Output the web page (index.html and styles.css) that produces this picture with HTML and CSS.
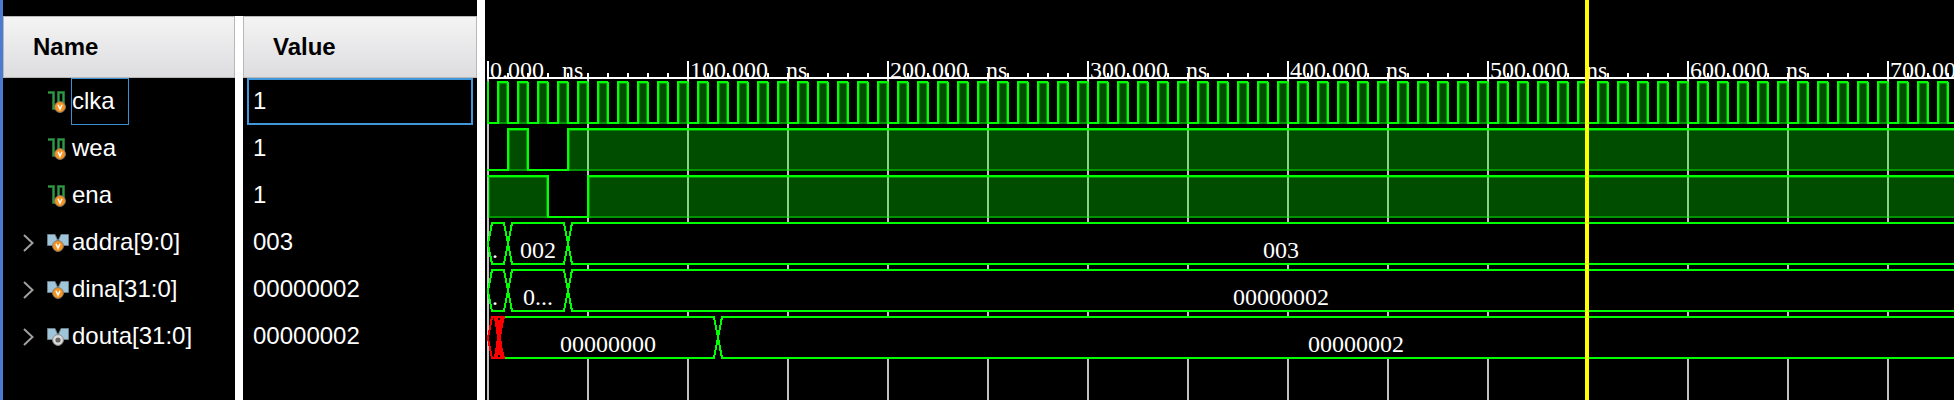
FILE: index.html
```html
<!DOCTYPE html>
<html lang="en">
<head>
<meta charset="utf-8">
<title>Waveform viewer</title>
<link rel="stylesheet" href="styles.css">
</head>
<body>
<svg class="defs" aria-hidden="true">
  <defs>
    <symbol id="scalar" viewBox="0 1 22 24">
      <path d="M1 3.5h5.5v16h5v-16h5v16" fill="none" stroke="#1c5a2a" stroke-width="3"/>
      <path d="M1 3.5h5.5v16h5v-16h5v16" fill="none" stroke="#2f9a46" stroke-width="1.6"/>
      <circle cx="13" cy="18" r="5.4" fill="#f7931e" stroke="#8a7a66"/>
      <path d="M11 15.8l2 4.400 2-4.400" fill="none" stroke="#fff" stroke-width="1.5"/>
    </symbol>
    <symbol id="bus-in" viewBox="0 0 22 24">
      <path d="M.5 3.500h7.500l2.500 5.500-3 5.500h-7zM21.500 3.500h-7.500l-2.500 5.500 3 5.500h7z" fill="#9fc5da" stroke="#6d7f88"/>
      <circle cx="11" cy="15" r="5.400" fill="#f7931e" stroke="#8a7a66"/>
      <path d="M9 12.800l2 4.400 2-4.400" fill="none" stroke="#fff" stroke-width="1.5"/>
    </symbol>
    <symbol id="bus-out" viewBox="0 0 22 24">
      <path d="M.5 3.500h7.500l2.500 5.500-3 5.500h-7zM21.500 3.500h-7.500l-2.500 5.500 3 5.500h7z" fill="#9fc5da" stroke="#6d7f88"/>
      <circle cx="11" cy="15" r="5.400" fill="#dcdcdc" stroke="#8a8a8a"/>
      <circle cx="11" cy="15" r="2.600" fill="#666"/>
    </symbol>
    <symbol id="chevron" viewBox="0 0 12 18"><path d="M1 1l8.500 8-8.500 8" fill="none" stroke="#a0a0a0" stroke-width="2"/></symbol>
    <pattern id="clock" x="3" y="0" width="20" height="47" patternUnits="userSpaceOnUse">
      <rect class="fill" x="10" y="3" width="10" height="42"/>
      <rect class="inner" x="11" y="4" width="8" height="40"/>
      <path class="edge" d="M-1 44H10V3H20V44H21M0 45V3"/>
    </pattern>
  </defs>
</svg>
<main class="viewer">
  <section class="column names">
    <h2>Name</h2>
    <ul>
      <li><svg class="icon"><use href="#scalar"/></svg><span class="focused">clka</span></li>
      <li><svg class="icon"><use href="#scalar"/></svg><span>wea</span></li>
      <li><svg class="icon"><use href="#scalar"/></svg><span>ena</span></li>
      <li><button aria-label="Expand addra"><svg><use href="#chevron"/></svg></button><svg class="icon"><use href="#bus-in"/></svg><span>addra[9:0]</span></li>
      <li><button aria-label="Expand dina"><svg><use href="#chevron"/></svg></button><svg class="icon"><use href="#bus-in"/></svg><span>dina[31:0]</span></li>
      <li><button aria-label="Expand douta"><svg><use href="#chevron"/></svg></button><svg class="icon"><use href="#bus-out"/></svg><span>douta[31:0]</span></li>
    </ul>
  </section>
  <div class="divider short"></div>
  <section class="column values">
    <h2>Value</h2>
    <ul>
      <li class="selected">1</li>
      <li>1</li>
      <li>1</li>
      <li>003</li>
      <li>00000002</li>
      <li>00000002</li>
    </ul>
  </section>
  <div class="divider"></div>
  <section class="waves">
    <div class="ruler">
      <div class="mark"><span>0.000</span><span>ns</span></div>
      <div class="mark"><span>100.000</span><span>ns</span></div>
      <div class="mark"><span>200.000</span><span>ns</span></div>
      <div class="mark"><span>300.000</span><span>ns</span></div>
      <div class="mark"><span>400.000</span><span>ns</span></div>
      <div class="mark"><span>500.000</span><span>ns</span></div>
      <div class="mark"><span>600.000</span><span>ns</span></div>
      <div class="mark"><span>700.00</span></div>
    </div>
    <div class="tracks">
      <div class="track"><svg><rect x="2" width="100%" height="47" fill="url(#clock)"/></svg></div>
      <div class="track"><svg>
        <path class="fill" d="M23 3H43V45H23zM83 3H6000V45H83z"/>
        <path class="inner" d="M24 4H42V44H24zM84 4H6000V44H84z"/>
        <path class="edge" d="M2 44H23V3H43V44H83V3H6000"/>
      </svg></div>
      <div class="track"><svg>
        <path class="fill" d="M3 3H63V45H3zM103 3H6000V45H103z"/>
        <path class="inner" d="M4 4H62V44H4zM104 4H6000V44H104z"/>
        <path class="edge" d="M2 3H63V44H103V3H6000"/>
      </svg></div>
      <div class="track"><svg>
        <path class="edge body" d="M3 24L7 3H19L27 44H79L87 3H6000V44H87L79 3H27L19 44H7z"/>
      </svg><div class="segments"><span class="w20">.</span><span class="w60">002</span><span class="rest">003</span></div></div>
      <div class="track"><svg>
        <path class="edge body" d="M3 24L7 3H19L27 44H79L87 3H6000V44H87L79 3H27L19 44H7z"/>
      </svg><div class="segments"><span class="w20">.</span><span class="w60">0...</span><span class="rest">00000002</span></div></div>
      <div class="track"><svg>
        <path class="edge body" d="M14 3H229L237 44H6000V3H237L229 44H14z"/>
        <path class="edge unknown" d="M3 24L7 3H19L14 24L19 44H7z"/>
        <path class="edge clash" d="M11 3L17 44M17 3L11 44"/>
      </svg><div class="segments"><span class="w10"></span><span class="w220">00000000</span><span class="rest">00000002</span></div></div>
    </div>
    <div class="cursor"></div>
  </section>
</main>
</body>
</html>
```
FILE: styles.css
```css
* { box-sizing: border-box; }
body {
  margin: 0;
  background: #000;
  color: #fff;
  font-family: "Liberation Sans", Arial, sans-serif;
  font-size: 24px;
}
.defs { position: absolute; width: 0; height: 0; }
.viewer {
  display: flex;
  min-height: 100vh;
  overflow: hidden;
  border-left: 3px solid #4a7bd0;
}
.column { flex: none; padding-top: 16px; }
.names { width: 232px; }
.values { width: 234px; }
.column h2 {
  margin: 0;
  height: 62px;
  padding-left: 29px;
  border: 1px solid #b8b8b8;
  background: linear-gradient(#f4f4f4, #dddde0);
  color: #000;
  font-size: 24px;
  line-height: 60px;
}
ul { margin: 0; padding: 0; list-style: none; }
li { height: 47px; line-height: 43px; }
.names li {
  display: flex;
  align-items: center;
  padding-left: 44px;
}
.names li:has(button) { padding-left: 20px; }
.names button {
  width: 12px;
  height: 18px;
  margin-right: 12px;
  padding: 0;
  border: 0;
  background: none;
}
.names button svg { display: block; width: 12px; height: 18px; }
.icon { width: 22px; height: 24px; margin-right: 2px; }
.names span { height: 47px; border: 1px solid transparent; }
.names .focused { padding-right: 13px; border-color: #3c8fd0; }
.values li {
  margin: 0 4px;
  padding-left: 4px;
  border: 2px solid transparent;
  line-height: 41px;
}
.values .selected { border-color: #4098d8; }
.divider { flex: none; width: 8px; background: #fff; }
.short { margin-top: 16px; }

.waves {
  position: relative;
  display: flex;
  flex: 1;
  flex-direction: column;
  min-width: 0;
  overflow: hidden;
  font-family: "Liberation Serif", "Times New Roman", serif;
}
.ruler {
  display: flex;
  height: 79px;
  margin-left: 2px;
  padding-top: 61px;
  border-bottom: 2px solid #fff;
  background: repeating-linear-gradient(90deg, #fff 0 2px, transparent 2px 20px) left bottom / 100% 4px no-repeat;
}
.mark {
  display: flex;
  flex: none;
  gap: 18px;
  width: 200px;
  padding-left: 1px;
  border-left: 2px solid #fff;
  line-height: 18px;
}
.tracks {
  flex: 1;
  background: repeating-linear-gradient(90deg, #c0c0c0 0 2px, transparent 2px 100px) 2px 0 no-repeat;
}
.track { display: grid; height: 47px; }
.track > * { grid-area: 1 / 1; min-width: 0; }
.track svg { display: block; width: 100%; height: 47px; shape-rendering: crispEdges; }
.fill { fill: rgb(0 255 0 / 30%); }
.inner { fill: none; stroke: rgb(0 255 0 / 40%); stroke-width: 2px; }
.edge { fill: none; stroke: #0f0; stroke-width: 2px; }
.body { fill: #000; }
.unknown { fill: #000; stroke: #f00; }
.clash { stroke: #f00; stroke-width: 4px; }
.segments {
  display: flex;
  margin-right: -40px;
  padding: 16px 0 0 3px;
  line-height: 28px;
  text-align: center;
}
.w10 { width: 10px; }
.w20 { width: 20px; padding-right: 6px; }
.w60 { width: 60px; }
.w220 { width: 220px; }
.rest { flex: 1; }
.cursor {
  position: absolute;
  top: 0;
  bottom: 0;
  left: 1100px;
  width: 4px;
  background: #ff0;
}
```
